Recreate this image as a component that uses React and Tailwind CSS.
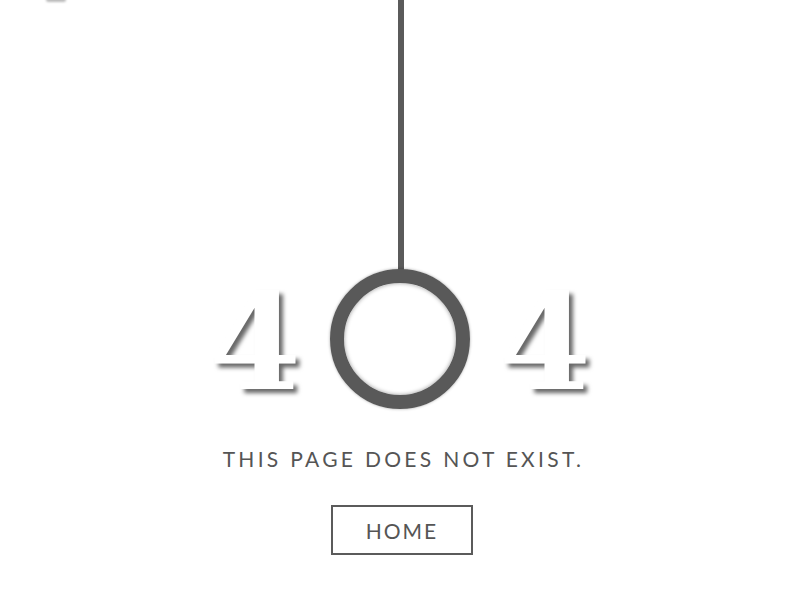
import React from "react";

const Four = () => (
  <span className="block w-[110px] text-center font-['DejaVu_Serif',serif] text-[132px] font-bold leading-none text-white [text-shadow:4px_4px_4px_rgba(0,0,0,0.6)]">
    4
  </span>
);

export default function App() {
  return (
    <div className="relative flex h-[600px] w-[800px] flex-col items-center overflow-hidden bg-white font-['Lato',sans-serif] text-[#555]">
      {/* little cut-off mark at the top left */}
      <div className="absolute left-[46px] top-[-3px] h-[5px] w-[20px] rounded-full bg-[#bbb] blur-[1px]" />

      {/* hanging string */}
      <div className="ml-[1px] h-[270px] w-[6px] bg-[#5b5b5b]" />

      <div className="flex items-center gap-[20px]">
        <div className="mt-[6px]">
          <Four />
        </div>
        <div className="-mt-[1px] h-[140px] w-[140px] rounded-full border-[14px] border-[#595959] shadow-[0_0_3px_rgba(0,0,0,0.35),inset_0_0_4px_rgba(0,0,0,0.4)]" />
        <div className="mt-[6px]">
          <Four />
        </div>
      </div>

      <p className="ml-[7px] mt-[39px] text-[21px] uppercase leading-none tracking-[3.3px]">
        This page does not exist.
      </p>

      <button className="ml-[4px] mt-[36px] h-[50px] w-[142px] border-2 border-[#5b5b5b] text-[21px] uppercase leading-none tracking-[2px] text-[#555]">
        Home
      </button>
    </div>
  );
}
